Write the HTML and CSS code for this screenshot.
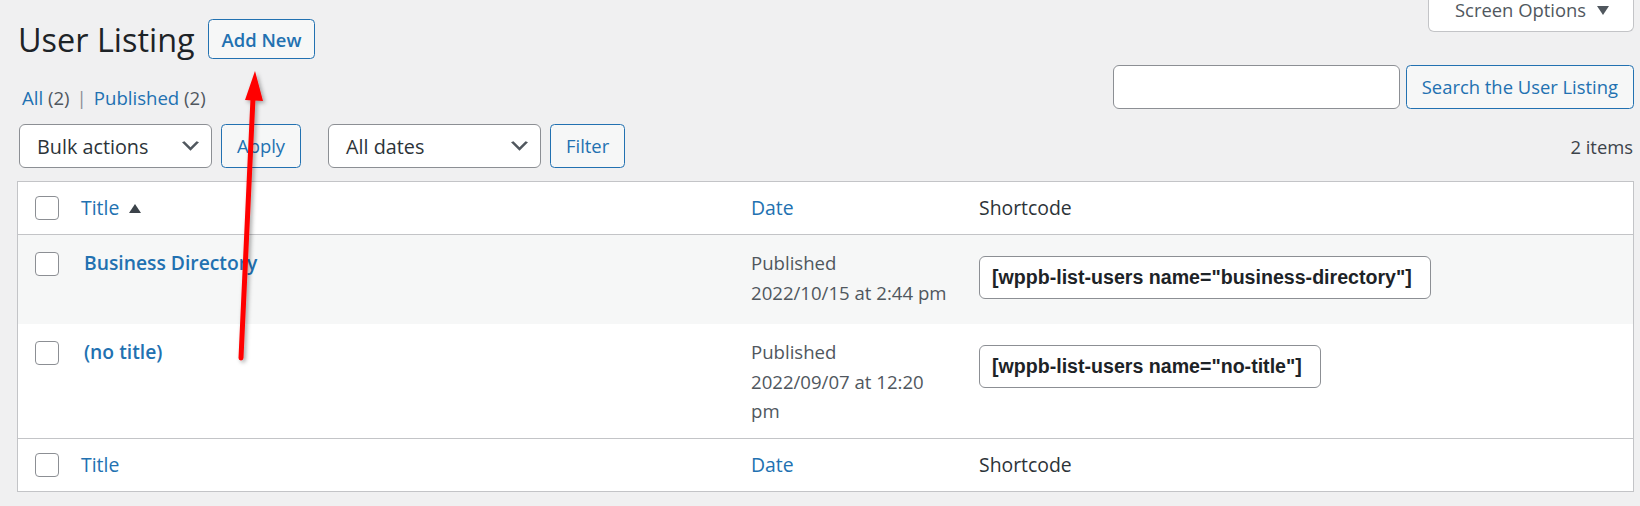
FILE: index.html
```html
<!DOCTYPE html>
<html>
<head>
<meta charset="utf-8">
<title>User Listing</title>
<link rel="stylesheet" href="styles.css">
</head>
<body>
<div class="page">
  <div class="header">
    <div class="title-row">
      <h1 class="page-title">User Listing</h1>
      <a class="btn-add" href="#">Add New</a>
    </div>
    <div class="screen-options">
      <span>Screen Options</span>
      <svg class="so-arrow" width="12" height="9" viewBox="0 0 12 9"><polygon points="0,0 12,0 6,9" fill="#50575e"/></svg>
    </div>
  </div>

  <div class="subrow">
    <ul class="subsubsub">
      <li><a href="#">All <span class="count">(2)</span></a></li>
      <li class="sep">|</li>
      <li><a href="#">Published <span class="count">(2)</span></a></li>
    </ul>
    <div class="search-box">
      <input class="search-input" type="text">
      <button class="btn">Search the User Listing</button>
    </div>
  </div>

  <div class="tablenav">
    <div class="actions">
      <div class="select select-bulk">
        <span>Bulk actions</span>
        <svg class="chev" width="17" height="10" viewBox="3 6 14 8"><path d="M5 6l5 5 5-5 2 1-7 7-7-7 2-1z" fill="#50575e"/></svg>
      </div>
      <button class="btn btn-apply">Apply</button>
      <div class="select select-dates">
        <span>All dates</span>
        <svg class="chev" width="17" height="10" viewBox="3 6 14 8"><path d="M5 6l5 5 5-5 2 1-7 7-7-7 2-1z" fill="#50575e"/></svg>
      </div>
      <button class="btn btn-filter">Filter</button>
    </div>
    <div class="items">2 items</div>
  </div>

  <table class="list">
    <colgroup>
      <col class="c-check"><col class="c-title"><col class="c-date"><col>
    </colgroup>
    <thead>
      <tr>
        <th class="check-col"><input class="cb" type="checkbox"></th>
        <th><a href="#" class="sort-link">Title <svg class="sort-arrow" width="12" height="9" viewBox="0 0 12 9"><polygon points="6,0 12,9 0,9" fill="#3c434a"/></svg></a></th>
        <th><a href="#">Date</a></th>
        <th>Shortcode</th>
      </tr>
    </thead>
    <tbody>
      <tr class="alt">
        <td class="check-col"><input class="cb" type="checkbox"></td>
        <td class="title-cell"><a href="#" class="row-title">Business Directory</a><div class="row-actions"></div></td>
        <td class="date-cell">Published<br>2022/10/15 at 2:44 pm</td>
        <td><span class="shortcode">[wppb-list-users name="business-directory"]</span></td>
      </tr>
      <tr>
        <td class="check-col"><input class="cb" type="checkbox"></td>
        <td class="title-cell"><a href="#" class="row-title">(no title)</a><div class="row-actions"></div></td>
        <td class="date-cell">Published<br>2022/09/07 at 12:20 pm</td>
        <td><span class="shortcode">[wppb-list-users name="no-title"]</span></td>
      </tr>
    </tbody>
    <tfoot>
      <tr>
        <th class="check-col"><input class="cb" type="checkbox"></th>
        <th><a href="#">Title</a></th>
        <th><a href="#">Date</a></th>
        <th>Shortcode</th>
      </tr>
    </tfoot>
  </table>
</div>

<svg class="annotation" width="300" height="380" viewBox="0 0 300 380">
  <defs>
    <filter id="sh" x="-50%" y="-10%" width="200%" height="120%">
      <feDropShadow dx="2" dy="2" stdDeviation="2" flood-color="#000" flood-opacity="0.35"/>
    </filter>
  </defs>
  <g filter="url(#sh)">
    <line x1="241" y1="358" x2="253" y2="98" stroke="#ff0000" stroke-width="5" stroke-linecap="round"/>
    <polygon points="255,71 263,101 245,100" fill="#ff0000"/>
  </g>
</svg>
</body>
</html>
```

FILE: styles.css
```css
* { box-sizing: border-box; }
html, body { margin: 0; padding: 0; }
body {
  background: #f0f0f1;
  font-family: "Open Sans", "Noto Sans", sans-serif;
  font-size: 18.4px;
  color: #3c434a;
  width: 1640px;
  height: 506px;
  overflow: hidden;
  position: relative;
}
a { color: #2271b1; text-decoration: none; }

.page { padding: 0 6px 0 17px; }

/* header */
.header {
  display: flex;
  justify-content: space-between;
  align-items: flex-start;
  height: 59px;
}
.title-row {
  display: flex;
  align-items: center;
  gap: 13px;
  padding-top: 19px;
}
.page-title {
  margin: 0;
  padding-left: 1px;
  font-size: 32.4px;
  line-height: 40px;
  font-weight: 400;
  color: #1d2327;
}
.btn-add {
  display: inline-flex;
  align-items: center;
  height: 40px;
  padding: 0 13px;
  border: 1px solid #2271b1;
  border-radius: 4.5px;
  background: #f6f7f7;
  color: #2271b1;
  font-size: 18.4px;
  font-weight: 600;
}
.screen-options {
  display: flex;
  align-items: center;
  gap: 11px;
  height: 32px;
  padding: 0 24px 11px 26px;
  background: #fff;
  border: 1px solid #c3c4c7;
  border-top: none;
  border-radius: 0 0 6px 6px;
  color: #50575e;
  line-height: 22px;
}
.so-arrow { display: block; margin-top: 1px; }

/* sub row */
.subrow {
  display: flex;
  justify-content: space-between;
  align-items: flex-start;
  margin-top: 6px;
  height: 44px;
}
.subsubsub {
  display: flex;
  margin: 18px 0 0;
  padding: 0 0 0 5px;
  list-style: none;
  line-height: 30px;
  font-size: 18.6px;
}
.count { color: #50575e; }
.sep { margin: 0 7px; color: #8c8f94; }
.search-box { display: flex; gap: 6px; }
.search-input {
  width: 287px;
  height: 44px;
  margin: 0;
  padding: 0 12px;
  border: 1px solid #8c8f94;
  border-radius: 6px;
  background: #fff;
  font: inherit;
}
.btn {
  height: 44px;
  margin: 0;
  padding: 0 15px;
  border: 1px solid #2271b1;
  border-radius: 4.5px;
  background: #f6f7f7;
  color: #2271b1;
  font-family: inherit;
  font-size: 18.4px;
  line-height: 42px;
}

/* tablenav */
.tablenav {
  display: flex;
  justify-content: space-between;
  align-items: center;
  margin-top: 15px;
  height: 44px;
}
.actions { display: flex; align-items: center; padding-left: 2px; }
.select {
  display: flex;
  align-items: center;
  justify-content: space-between;
  height: 44px;
  padding: 0 12px 0 17px;
  border: 1px solid #8c8f94;
  border-radius: 6px;
  background: #fff;
  color: #2c3338;
  font-size: 19.8px;
}
.chev { display: block; }
.select-bulk { width: 193px; }
.select-dates { width: 213px; margin-left: 27px; }
.btn-apply, .btn-filter { margin-left: 9px; }
.items { color: #3c434a; padding-right: 1px; }

/* table */
.list {
  width: 100%;
  margin-top: 13px;
  border-collapse: separate;
  border-spacing: 0;
  border: 1px solid #c3c4c7;
  background: #fff;
  table-layout: fixed;
}
.c-check { width: 48px; }
.c-title { width: 670px; }
.c-date { width: 228px; }
th, td {
  padding: 13px 15px 12px;
  text-align: left;
  vertical-align: top;
  font-weight: 400;
  line-height: 29.5px;
}
thead th, tfoot th {
  padding: 12px 15px;
  line-height: 28px;
  vertical-align: middle;
  font-size: 19.4px;
  color: #2c3338;
}
thead th { border-bottom: 1px solid #c3c4c7; }
tfoot th { border-top: 1px solid #c3c4c7; }
.alt td { background: #f6f7f7; }
.list .check-col { padding-left: 17px; padding-right: 0; }
.cb {
  appearance: none;
  -webkit-appearance: none;
  display: block;
  width: 24px;
  height: 24px;
  margin: 0;
  border: 1px solid #8c8f94;
  border-radius: 4px;
  background: #fff;
}
td .cb { margin-top: 4px; }
.sort-link { display: inline-flex; align-items: center; gap: 10px; }
.sort-arrow { display: block; }
.list .title-cell { padding-left: 18px; }
.row-title {
  display: block;
  font-weight: 600;
  font-size: 19.3px;
  line-height: 30px;
  color: #2271b1;
}
.row-actions { height: 34px; }
.date-cell { color: #50575e; font-size: 18.6px; }
.shortcode {
  display: block;
  width: max-content;
  margin-top: 8px;
  height: 43px;
  padding: 0 18px 0 12px;
  border: 1px solid #8c8f94;
  border-radius: 6px;
  background: #fff;
  font-family: "Liberation Sans", Arial, sans-serif;
  font-weight: 700;
  font-size: 19.6px;
  line-height: 41px;
  color: #1d2327;
  white-space: nowrap;
}

/* annotation overlay */
.annotation {
  position: absolute;
  left: 0;
  top: 0;
  pointer-events: none;
}
```
